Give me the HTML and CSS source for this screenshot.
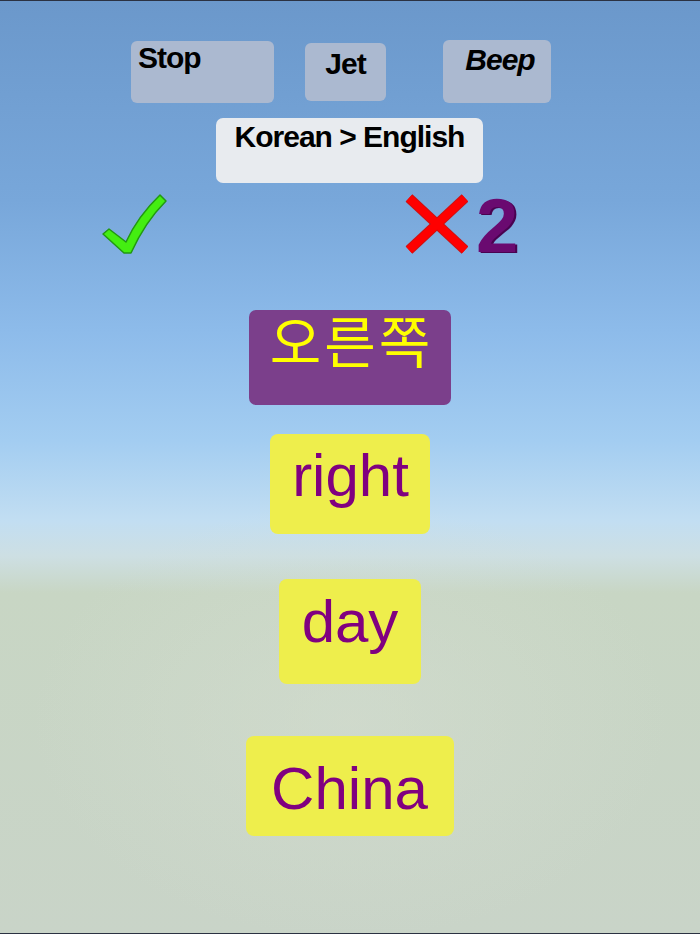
FILE: index.html
```html
<!DOCTYPE html>
<html lang="ko">
<head>
    <meta charset="UTF-8">
    <meta name="viewport" content="width=device-width, initial-scale=1.0">
    <title>Word Quiz</title>
    <link rel="stylesheet" href="styles.css">
</head>
<body>

    <div class="scene">

        <!-- Botones de sonido -->
        <div class="sound-bar">
            <div class="sound-btn stop">Stop</div>
            <div class="sound-btn jet">Jet</div>
            <div class="sound-btn beep">Beep</div>
        </div>

        <div class="mode-row">
            <div class="mode-btn">Korean &gt; English</div>
        </div>

        <!-- Aciertos y fallos -->
        <div class="score-row">
            <svg class="mark-ok" width="70" height="66" viewBox="0 0 70 66">
                <path d="M3,43 L9,38 L26,51 Q38,25 60,4 L66,10 Q45,31 31,62 L24,62 Z"
                      fill="#44ee11" stroke="#229911" stroke-width="1.5" stroke-linejoin="round"/>
            </svg>
            <div class="fails">
                <svg class="mark-bad" width="68" height="66" viewBox="0 0 68 66">
                    <g stroke="#cc1111" stroke-width="10">
                        <line x1="9" y1="7" x2="65" y2="59"/>
                        <line x1="65" y1="7" x2="9" y2="59"/>
                    </g>
                    <g stroke="#ff0000" stroke-width="8">
                        <line x1="9" y1="7" x2="65" y2="59"/>
                        <line x1="65" y1="7" x2="9" y2="59"/>
                    </g>
                </svg>
                <span class="fail-count">2</span>
            </div>
        </div>

        <!-- Palabra y opciones -->
        <div class="cards">
            <div class="word-card">오른쪽</div>
            <div class="option-card opt-right">right</div>
            <div class="option-card opt-day">day</div>
            <div class="option-card opt-china">China</div>
        </div>

    </div>

</body>
</html>
```

FILE: styles.css
```css
/* Estilos Generales */
html, body {
    margin: 0;
    padding: 0;
}

body {
    font-family: 'Liberation Sans', Arial, sans-serif;
    color: #000;
}

/* Cielo y suelo */
.scene {
    box-sizing: border-box;
    min-height: 934px;
    border-top: 1px solid #2b3242;
    border-bottom: 1px solid #2b3242;
    background:
        radial-gradient(ellipse 320px 220px at 350px 720px, rgba(214, 222, 210, 0.5), rgba(214, 222, 210, 0) 100%),
        linear-gradient(to bottom,
            #6b98cb 0px,
            #78a7da 200px,
            #8dbbea 330px,
            #a3cdf1 440px,
            #c2def2 520px,
            #cddfe3 555px,
            #c8d6c4 592px,
            #c9d4c8 934px);
    overflow: hidden;
}

/* Botones de sonido */
.sound-bar {
    display: flex;
    align-items: flex-start;
    padding-top: 38px;
    padding-left: 131px;
}

.sound-btn {
    box-sizing: border-box;
    background-color: #abb9d0;
    border-radius: 6px;
    font-weight: bold;
    font-size: 30px;
    line-height: 30px;
    letter-spacing: -1px;
}

.stop {
    width: 143px;
    height: 62px;
    margin-top: 2px;
    padding: 2px 0 0 7px;
}

.jet {
    width: 81px;
    height: 58px;
    margin-top: 4px;
    margin-left: 31px;
    padding-top: 6px;
    text-align: center;
}

.beep {
    width: 108px;
    height: 63px;
    margin-top: 1px;
    margin-left: 57px;
    padding: 5px 0 0 6px;
    text-align: center;
    font-style: italic;
}

.mode-row {
    display: flex;
    justify-content: center;
    margin-top: 15px;
}

.mode-btn {
    box-sizing: border-box;
    width: 267px;
    height: 65px;
    margin-left: -1px;
    padding-top: 4px;
    background-color: #e8ebef;
    border-radius: 7px;
    text-align: center;
    font-weight: bold;
    font-size: 30px;
    line-height: 30px;
    letter-spacing: -1px;
}

/* Aciertos y fallos */
.score-row {
    display: flex;
    align-items: flex-start;
    height: 66px;
    margin-top: 8px;
}

.mark-ok {
    display: block;
    margin-left: 100px;
}

.fails {
    display: flex;
    align-items: flex-start;
    margin-left: 230px;
}

.mark-bad {
    display: block;
}

.fail-count {
    margin-top: -3px;
    margin-left: 8px;
    font-weight: bold;
    font-size: 76px;
    line-height: 76px;
    color: #6a0a70;
    text-shadow: 2px 1px 0 #4a0250;
}

/* Tarjetas */
.cards {
    display: flex;
    flex-direction: column;
    align-items: center;
    margin-top: 53px;
}

.word-card {
    box-sizing: border-box;
    width: 202px;
    height: 95px;
    padding-top: 1px;
    background-color: #7b3f8b;
    border-radius: 7px;
    text-align: center;
    color: #ffff00;
    font-family: 'Noto Sans CJK KR', 'Noto Sans', sans-serif;
    font-size: 56px;
    line-height: 56px;
    letter-spacing: 3px;
    text-indent: 3px;
}

.option-card {
    box-sizing: border-box;
    height: 100px;
    padding: 0 23px;
    background-color: #eeee4c;
    border-radius: 8px;
    color: #800080;
    font-size: 60px;
    line-height: 60px;
}

.opt-right {
    margin-top: 29px;
    padding-top: 12px;
    padding-left: 22px;
    padding-right: 21px;
}

.opt-day {
    height: 105px;
    margin-top: 45px;
    padding-top: 13px;
}

.opt-china {
    margin-top: 52px;
    padding-top: 23px;
    padding-right: 26px;
    padding-left: 25px;
}
```
